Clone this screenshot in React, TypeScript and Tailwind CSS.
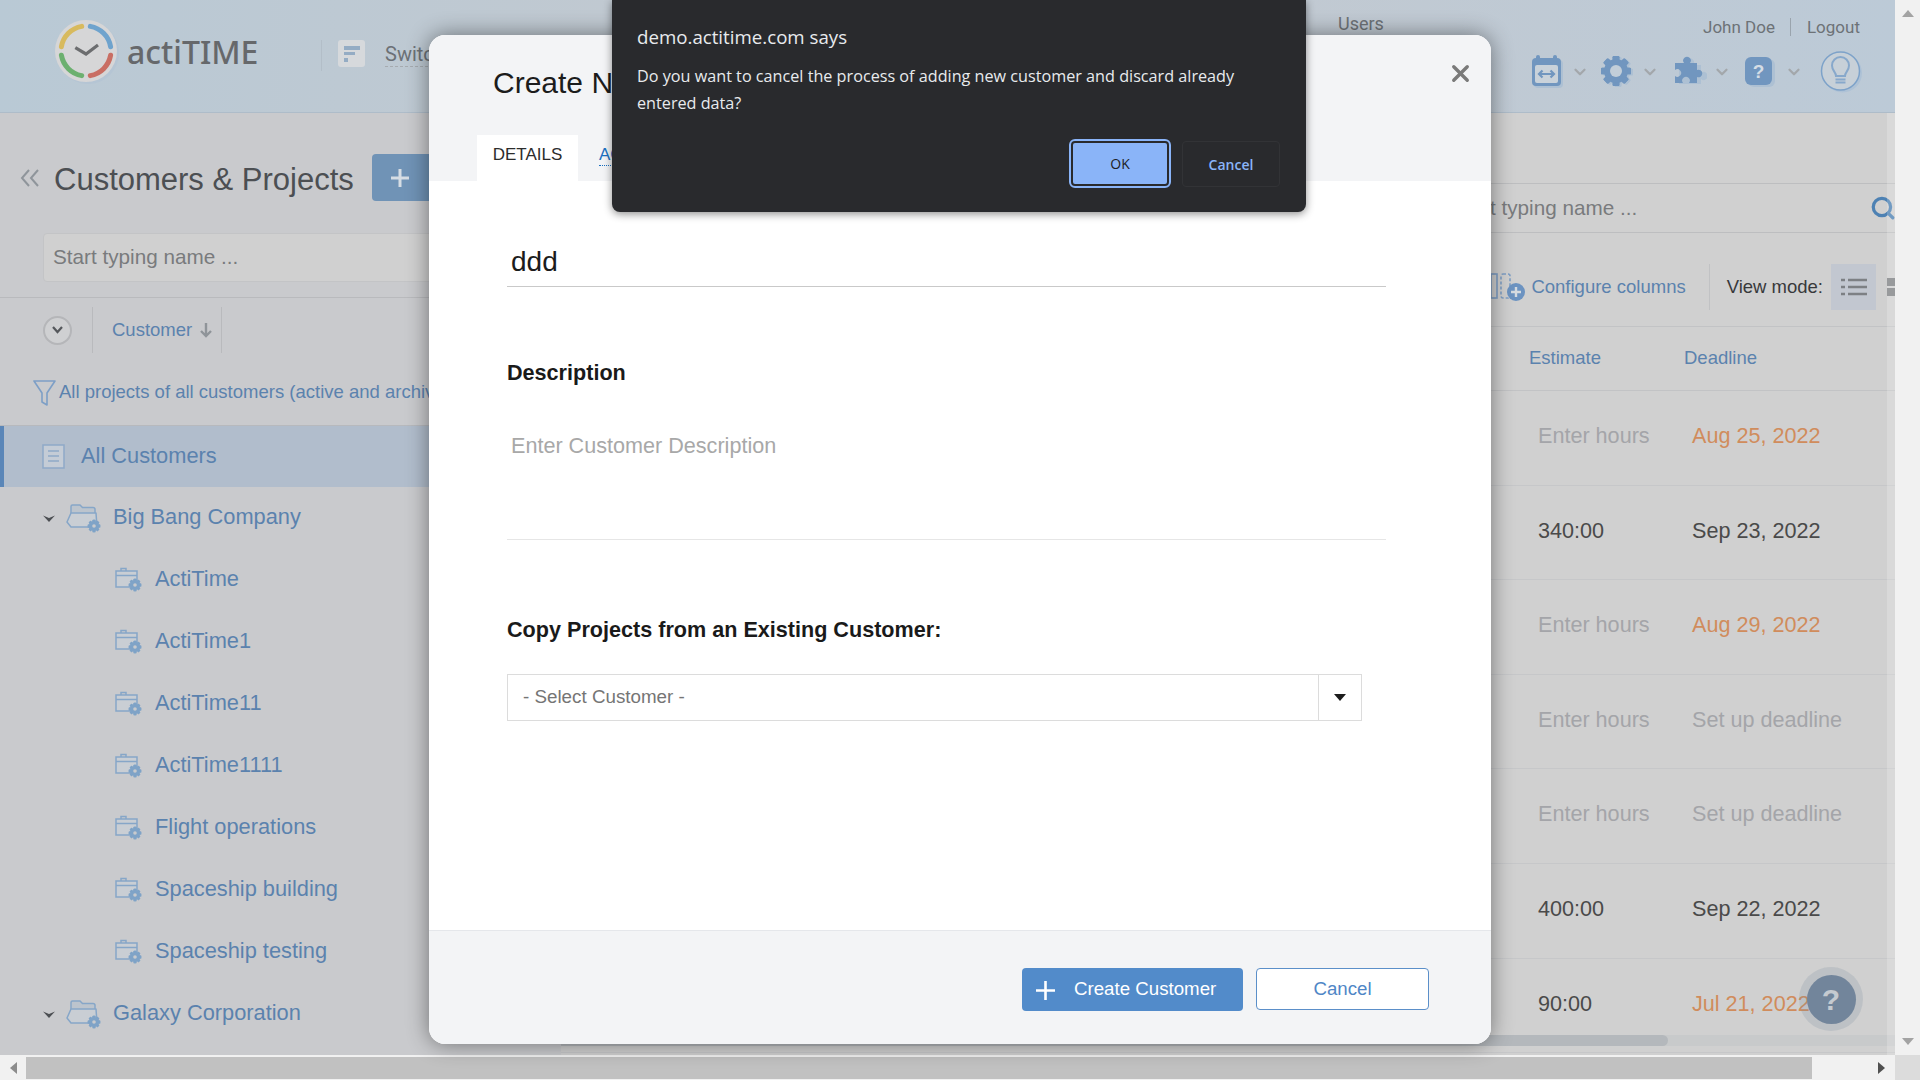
import {ChevronDown, Search, X} from "lucide-react";

const PROJECTS = ["ActiTime", "ActiTime1", "ActiTime11", "ActiTime1111", "Flight operations", "Spaceship building", "Spaceship testing"];

const ROWS = [
    {estimate: "Enter hours", deadline: "Aug 25, 2022", estimateColor: "text-[#a4a5a9]", deadlineColor: "text-[#d08c5c]"},
    {estimate: "340:00", deadline: "Sep 23, 2022", estimateColor: "text-[#4a4a4a]", deadlineColor: "text-[#4a4a4a]"},
    {estimate: "Enter hours", deadline: "Aug 29, 2022", estimateColor: "text-[#a4a5a9]", deadlineColor: "text-[#d08c5c]"},
    {estimate: "Enter hours", deadline: "Set up deadline", estimateColor: "text-[#a4a5a9]", deadlineColor: "text-[#a4a5a9]"},
    {estimate: "Enter hours", deadline: "Set up deadline", estimateColor: "text-[#a4a5a9]", deadlineColor: "text-[#a4a5a9]"},
    {estimate: "400:00", deadline: "Sep 22, 2022", estimateColor: "text-[#4a4a4a]", deadlineColor: "text-[#4a4a4a]"},
    {estimate: "90:00", deadline: "Jul 21, 2022", estimateColor: "text-[#4a4a4a]", deadlineColor: "text-[#d08c5c]"},
];

function Logo() {
    return (
        <svg width="66" height="66" viewBox="0 0 66 66" className="shrink-0">
            <circle cx="34" cy="34" r="31" fill="#b5c5d4" />
            <circle cx="32" cy="32" r="31" fill="#d6d6d7" />
            <g fill="none" strokeWidth="5" strokeLinecap="round">
                <path d="M7.4 27.7A25 25 0 0 1 27.7 7.4" stroke="#d8ba5e" />
                <path d="M36.3 7.4A25 25 0 0 1 56.6 27.7" stroke="#6fa3cd" />
                <path d="M56.6 36.3A25 25 0 0 1 36.3 56.6" stroke="#c96e63" />
                <path d="M27.7 56.6A25 25 0 0 1 7.4 36.3" stroke="#6cb06f" />
                <path d="M21.3 28.7L32 35L44 26" stroke="#6c6d6f" strokeWidth="3.2" strokeLinecap="butt" />
            </g>
        </svg>
    );
}

function Gear({x, y, r, color}: {x: number; y: number; r: number; color: string}) {
    const teeth = [0, 45, 90, 135, 180, 225, 270, 315];
    return (
        <g>
            {teeth.map((deg) => (
                <rect key={deg} x={x - r * 0.28} y={y - r * 1.25} width={r * 0.56} height={r * 2.5} rx={r * 0.1} fill={color} transform={`rotate(${deg} ${x} ${y})`} />
            ))}
            <circle cx={x} cy={y} r={r} fill={color} />
        </g>
    );
}

function CustomerIcon() {
    return (
        <svg width="36" height="30" viewBox="0 0 36 30" className="shrink-0">
            <path d="M5 12V3.5C5 2.5 5.7 2 6.5 2H14L16.5 4.5H27C28 4.5 29 5.2 29 6.3V12" fill="#bcc4cd" stroke="#86a6c8" strokeWidth="1.5" />
            <path d="M1 19L5 10H30L31 24H5L1 19Z" fill="#c9ced4" stroke="#86a6c8" strokeWidth="1.5" strokeLinejoin="round" />
            <Gear x={28} y={23} r={5} color="#7fa3c7" />
            <circle cx="28" cy="23" r="1.8" fill="#c9cacd" />
        </svg>
    );
}

function ProjectIcon() {
    return (
        <svg width="28" height="26" viewBox="0 0 28 26" className="shrink-0">
            <rect x="1" y="4" width="21" height="16" fill="#c9ced4" stroke="#86a6c8" strokeWidth="1.5" />
            <path d="M1 8.5H22" stroke="#86a6c8" strokeWidth="1.5" />
            <path d="M6 4V1.5H11V4" fill="none" stroke="#86a6c8" strokeWidth="1.5" />
            <Gear x={20} y={18} r={5} color="#7fa3c7" />
            <circle cx="20" cy="18" r="1.8" fill="#c9cacd" />
        </svg>
    );
}

function ToolCaret() {
    return <ChevronDown size={18} strokeWidth={3} className="text-[#a3a7ab]" />;
}

function HeaderTools() {
    return (
        <div className="flex items-center h-[44px] pl-[1531px]">
            <svg width="34" height="36" viewBox="0 0 34 36" className="shrink-0">
                <rect x="3" y="6" width="29" height="28" rx="4" fill="#adc0d3" />
                <rect x="1" y="4" width="29" height="28" rx="4" fill="#7196bf" />
                <rect x="5" y="1" width="4" height="7" rx="2" fill="#7196bf" />
                <rect x="22" y="1" width="4" height="7" rx="2" fill="#7196bf" />
                <rect x="4" y="11" width="23" height="18" rx="2" fill="#c9d2da" />
                <path d="M8 20H23M11.5 16.5L8 20L11.5 23.5M19.5 16.5L23 20L19.5 23.5" fill="none" stroke="#7196bf" strokeWidth="2.2" />
            </svg>
            <div className="ml-[6px] w-[29px]"><ToolCaret /></div>
            <svg width="36" height="34" viewBox="0 0 36 34" className="shrink-0">
                <Gear x={18} y={17} r={12} color="#adc0d3" />
                <Gear x={16} y={16} r={12} color="#7196bf" />
                <circle cx="16" cy="16" r="6" fill="#c2ced9" />
            </svg>
            <div className="ml-[5px] w-[32px]"><ToolCaret /></div>
            <svg width="34" height="36" viewBox="0 0 34 36" className="shrink-0">
                <path d="M6 11H14A4 4 0 1 1 20 11H28V19A4 4 0 1 1 28 25V30H6Z" fill="#adc0d3" />
                <path d="M2 9H11A3.8 3.8 0 1 1 17 9H24V16A3.8 3.8 0 1 1 24 23V29H16A3.8 3.8 0 1 0 10 29H2V22A3.8 3.8 0 1 0 2 16Z" fill="#7196bf" />
            </svg>
            <div className="ml-[6px] w-[31px]"><ToolCaret /></div>
            <svg width="32" height="32" viewBox="0 0 32 32" className="shrink-0">
                <rect x="4" y="3" width="27" height="28" rx="6" fill="#adc0d3" />
                <rect x="1" y="1" width="27" height="28" rx="6" fill="#7196bf" />
                <text x="14.5" y="22" textAnchor="middle" fontSize="19" fontWeight="700" fontFamily="Liberation Sans" fill="#d5dde5">?</text>
            </svg>
            <div className="ml-[9px] w-[35px]"><ToolCaret /></div>
            <svg width="44" height="44" viewBox="0 0 44 44" className="shrink-0">
                <circle cx="22.5" cy="23" r="19.5" fill="#aec2d6" />
                <circle cx="20.5" cy="21" r="19" fill="#c7d0d8" stroke="#7da2c9" strokeWidth="1.5" />
                <path d="M16 26C16 22 12 21 12 15.5A8.5 8.5 0 0 1 29 15.5C29 21 25 22 25 26Z" fill="none" stroke="#87a8cb" strokeWidth="2" />
                <path d="M15.5 29.5H25.5M15.5 32.5H25.5" stroke="#87a8cb" strokeWidth="2" />
            </svg>
        </div>
    );
}

function PageHeader() {
    return (
        <header className="relative h-[113px] shrink-0 border-b border-[#aebcc9] bg-linear-to-r from-[#b9c9d5] via-[#c4c9cf] to-[#bccad7] overflow-hidden">
            <div className="absolute left-[54px] top-[19px] flex items-center">
                <Logo />
                <span className="ml-[7px] -mt-[1px] font-['Noto_Sans',sans-serif] text-[32px] leading-none font-medium text-[#66686b]">actiTIME</span>
            </div>
            <div className="absolute left-[321px] top-[40px] h-[31px] w-px bg-[#b3bec8]" />
            <div className="absolute left-[338px] top-[40px] flex h-[27px] w-[27px] items-center justify-center rounded-[3px] bg-[#d6d9dc]">
                <svg width="18" height="18" viewBox="0 0 18 18">
                    <path d="M1 1H17V5H1ZM1 7H12V10H1ZM1 13H5V17H1Z" fill="#94acc4" />
                </svg>
            </div>
            <span className="absolute left-[385px] top-[44px] border-b border-dashed border-[#a6abb0] pb-[2px] font-['Roboto',sans-serif] text-[20px] leading-[20px] text-[#6c7176]">Switch to</span>
            <span className="absolute left-[1338px] top-[12px] font-['Roboto',sans-serif] text-[18px] leading-[24px] text-[#6d7277]">Users</span>
            <div className="absolute left-[1703px] top-[15px] flex items-center font-['Roboto',sans-serif] text-[17px] leading-[24px] text-[#6d7277]">
                <span>John Doe</span>
                <span className="ml-[15px] mr-[16px] h-[18px] w-px bg-[#9aa4ad]" />
                <span>Logout</span>
            </div>
            <div className="absolute left-0 top-[50px]">
                <HeaderTools />
            </div>
        </header>
    );
}

function LeftPanel() {
    return (
        <aside className="flex h-full w-[561px] shrink-0 flex-col overflow-hidden bg-[#c9cacd]">
            <div className="flex h-[120px] shrink-0 items-start pl-[20px] pt-[41px]">
                <svg width="20" height="18" viewBox="0 0 20 18" className="mt-[15px] shrink-0">
                    <path d="M9 1L2 9L9 17M18 1L11 9L18 17" fill="none" stroke="#8f959b" strokeWidth="2" />
                </svg>
                <h1 className="ml-[14px] mt-[2px] text-[31px] leading-[47px] whitespace-nowrap text-[#4c4f53]">Customers &amp; Projects</h1>
                <button className="ml-[18px] flex h-[47px] w-[100px] shrink-0 items-center rounded-[4px] bg-[#7093b6] pl-[18px]">
                    <svg width="20" height="20" viewBox="0 0 20 20">
                        <path d="M10 1V19M1 10H19" stroke="#d6dde4" strokeWidth="3" />
                    </svg>
                </button>
            </div>
            <div className="shrink-0 border-b border-[#b9babd] px-[43px] pb-[15px]">
                <div className="flex h-[49px] w-[500px] items-center rounded-[4px] border border-[#c3c4c6] bg-[#d0d0d0] pb-[1px] pl-[9px] text-[20.7px] text-[#797b7d]">Start typing name ...</div>
            </div>
            <div className="flex h-[65px] shrink-0 items-center pb-[1px] pl-[43px]">
                <div className="flex h-[29px] w-[29px] items-center justify-center rounded-full border-2 border-[#b5b6b9] bg-[#cfd0d2]">
                    <svg width="11" height="8" viewBox="0 0 11 8">
                        <path d="M1 1L5.5 6L10 1" fill="none" stroke="#55585c" strokeWidth="2.2" />
                    </svg>
                </div>
                <div className="ml-[20px] h-[46px] w-px bg-[#b9babd]" />
                <span className="ml-[19px] text-[18.5px] text-[#5b82ae]">Customer</span>
                <svg width="14" height="16" viewBox="0 0 14 16" className="ml-[7px]">
                    <path d="M7 1V14M2 9L7 14L12 9" fill="none" stroke="#8f9499" strokeWidth="2.4" />
                </svg>
                <div className="ml-[8px] h-[46px] w-px bg-[#b9babd]" />
            </div>
            <div className="flex h-[62px] shrink-0 items-start pl-[33px] pt-[17px] whitespace-nowrap">
                <svg width="23" height="27" viewBox="0 0 23 27" className="shrink-0">
                    <path d="M1 1H22L14 13V25L9 22V13Z" fill="none" stroke="#7d9fc6" strokeWidth="1.6" strokeLinejoin="round" />
                </svg>
                <span className="ml-[3px] text-[18.5px] leading-[24px] text-[#5b82ae]">All projects of all customers (active and archived)</span>
            </div>
            <div className="relative flex h-[62px] shrink-0 items-center border-t border-[#b7b9bd] bg-[#b1bdcc] pb-[1px] pl-[42px]">
                <div className="absolute inset-y-0 left-0 w-[4px] bg-[#5a86b8]" />
                <svg width="23" height="25" viewBox="0 0 23 25" className="shrink-0">
                    <rect x="1" y="1" width="21" height="23" fill="#c4ccd6" stroke="#8fa9c7" strokeWidth="1.5" />
                    <path d="M6 7H17M6 12H17M6 17H17" stroke="#8fa9c7" strokeWidth="1.5" />
                </svg>
                <span className="ml-[16px] text-[21.8px] text-[#5b82ae]">All Customers</span>
            </div>
            <CustomerRow name="Big Bang Company" />
            {PROJECTS.map((project) => (
                <div key={project} className="flex h-[62px] shrink-0 items-center pb-[1px] pl-[115px]">
                    <ProjectIcon />
                    <span className="ml-[12px] text-[21.8px] text-[#5b82ae]">{project}</span>
                </div>
            ))}
            <CustomerRow name="Galaxy Corporation" />
        </aside>
    );
}

function CustomerRow({name}: {name: string}) {
    return (
        <div className="flex h-[62px] shrink-0 items-center pb-[1px] pl-[43px]">
            <svg width="12" height="8" viewBox="0 0 12 8" className="shrink-0">
                <path d="M0 1.5L6 4L12 1.5L6 8Z" fill="#4c4f53" />
            </svg>
            <span className="ml-[11px]"><CustomerIcon /></span>
            <span className="ml-[11px] text-[21.8px] text-[#5b82ae]">{name}</span>
        </div>
    );
}

function RightPanel() {
    return (
        <section className="relative flex h-full min-w-0 flex-1 flex-col overflow-hidden bg-[#d0d0d0]">
            <div className="mt-[70px] flex h-[50px] shrink-0 items-center justify-between border-y border-[#bdbec0] pl-[891px]">
                <span className="text-[20.7px] text-[#797b7d]">Start typing name ...</span>
                <Search size={26} strokeWidth={3} className="-mr-[1px] text-[#4d81b3]" />
            </div>
            <div className="flex h-[94px] shrink-0 items-center justify-end border-b border-[#c2c3c5] pt-[15px]">
                <svg width="36" height="34" viewBox="0 0 36 34" className="shrink-0">
                    <rect x="1" y="4" width="6" height="24" fill="none" stroke="#7f9fc5" strokeWidth="1.6" />
                    <rect x="11" y="4" width="9" height="24" rx="2" fill="none" stroke="#7f9fc5" strokeWidth="1.6" strokeDasharray="3 2" />
                    <circle cx="26" cy="22" r="9" fill="#6c93c1" />
                    <path d="M26 17V27M21 22H31" stroke="#d6dbe0" strokeWidth="2.4" />
                </svg>
                <span className="ml-[5px] text-[18.5px] text-[#5b82ae]">Configure columns</span>
                <div className="ml-[23px] h-[46px] w-px bg-[#c1c2c4]" />
                <span className="ml-[17px] text-[18.5px] text-[#38393b]">View mode:</span>
                <div className="ml-[8px] flex h-[46px] w-[45px] items-center justify-center bg-[#c2c7d0]">
                    <svg width="26" height="18" viewBox="0 0 26 18">
                        <path d="M0 2H4M7 2H26M0 9H4M7 9H26M0 16H4M7 16H26" stroke="#7d8084" strokeWidth="2.6" />
                    </svg>
                </div>
                <div className="ml-[11px] w-[8px] overflow-hidden">
                    <svg width="20" height="18" viewBox="0 0 20 18">
                        <path d="M0 0H8V8H0ZM0 10H8V18H0Z" fill="#7f8184" />
                    </svg>
                </div>
            </div>
            <div className="flex h-[64px] shrink-0 items-center justify-end border-b border-[#c2c3c5] pb-[2px] text-[18.5px] text-[#5b82ae]">
                <span className="w-[155px]">Estimate</span>
                <span className="w-[211px]">Deadline</span>
            </div>
            {ROWS.map((row, idx) => (
                <div key={idx} className="flex h-[94.6px] shrink-0 items-center justify-end border-b border-[#c6c7c9] pb-[3px] text-[21.6px]">
                    <span className={`w-[155px] pl-[9px] ${row.estimateColor}`}>{row.estimate}</span>
                    <span className={`w-[211px] pl-[8px] ${row.deadlineColor}`}>{row.deadline}</span>
                </div>
            ))}
            {/* inner scrollbar */}
            <div className="absolute bottom-[9px] left-0 right-0 h-[11px] bg-[#c8cacb]">
                <div className="h-full w-[1107px] rounded-r-[6px] bg-[#b4b8bc]" />
            </div>
            <div className="absolute inset-y-0 right-0 w-[8px] bg-white/20" />
        </section>
    );
}

function CreateCustomerModal() {
    return (
        <div className="absolute left-[429px] top-[35px] flex h-[1009px] w-[1062px] flex-col overflow-hidden rounded-[16px] bg-white shadow-[0_0_22px_rgba(0,0,0,0.45)]">
            <div className="relative h-[146px] shrink-0 bg-[#f3f4f6]">
                <h2 className="absolute left-[64px] top-[29px] text-[30px] leading-[38px] whitespace-nowrap text-[#1c1c1c]">Create New Customer</h2>
                <X size={27} strokeWidth={3} className="absolute right-[17px] top-[25px] text-[#7a7a7a]" />
                <div className="absolute bottom-0 left-[48px] flex h-[46px] items-center">
                    <div className="flex h-full w-[101px] items-center justify-center bg-white pb-[6px] text-[17px] text-[#2c2c2c]">DETAILS</div>
                    <span className="mb-[6px] ml-[21px] border-b border-dotted border-[#1a6fc0] text-[17px] leading-[21px] text-[#1a6fc0]">ACCESS</span>
                </div>
            </div>
            <div className="flex min-h-0 flex-1 flex-col pl-[78px] pr-[105px]">
                <div className="mt-[65px] h-[41px] border-b border-[#c9c9c9] pl-[4px] text-[28px] leading-[32px] text-[#1c1c1c]">ddd</div>
                <div className="mt-[73px] text-[21.6px] leading-[26px] font-bold text-[#1a1a1a]">Description</div>
                <div className="mt-[47px] h-[107px] border-b border-[#e6e6e6] pl-[4px] text-[21.6px] leading-[26px] text-[#a8a8a8]">Enter Customer Description</div>
                <div className="mt-[77px] text-[21.6px] leading-[26px] font-bold whitespace-nowrap text-[#1a1a1a]">Copy Projects from an Existing Customer:</div>
                <div className="mt-[31px] flex h-[47px] w-[855px] items-center border border-[#dcdcdc]">
                    <span className="flex-1 pl-[15px] text-[18.8px] text-[#757575]">- Select Customer -</span>
                    <div className="flex h-full w-[43px] items-center justify-center border-l border-[#dcdcdc]">
                        <svg width="12" height="7" viewBox="0 0 12 7">
                            <path d="M0 0H12L6 7Z" fill="#1c1c1c" />
                        </svg>
                    </div>
                </div>
            </div>
            <div className="flex h-[114px] shrink-0 items-start border-t border-[#e5e7eb] bg-[#f3f4f6] pl-[593px] pt-[37px]">
                <button className="flex h-[43px] w-[221px] items-center rounded-[4px] bg-[#528bca] pl-[14px] text-[18.7px] text-white">
                    <svg width="19" height="19" viewBox="0 0 19 19" className="mt-[2px] shrink-0">
                        <path d="M9.5 0V19M0 9.5H19" stroke="white" strokeWidth="2.6" />
                    </svg>
                    <span className="ml-[19px]">Create Customer</span>
                </button>
                <button className="ml-[13px] h-[42px] w-[173px] rounded-[4px] border border-[#5b8fc9] bg-white text-[18.7px] text-[#4f86c6]">Cancel</button>
            </div>
        </div>
    );
}

function ConfirmDialog() {
    return (
        <div className="absolute left-[612px] top-0 h-[212px] w-[694px] rounded-b-[8px] bg-[#292a2d] pl-[25px] font-['Open_Sans',sans-serif] shadow-[0_2px_8px_rgba(0,0,0,0.45)]">
            <div className="pt-[24px] text-[18.7px] leading-[26px] text-[#e8eaed]">demo.actitime.com says</div>
            <div className="mt-[13px] w-[640px] text-[16.2px] leading-[27px] text-[#e8eaed]">Do you want to cancel the process of adding new customer and discard already entered data?</div>
            <div className="absolute left-[457px] top-[139px] flex h-[49px] w-[102px] items-center justify-center rounded-[6px] border-[2px] border-[#8ab4f8] bg-[#8ab4f8] outline-[2px] -outline-offset-[4px] outline-[#292a2d] text-[14px] text-[#202124]">OK</div>
            <div className="absolute left-[570px] top-[141px] flex h-[46px] w-[98px] items-center justify-center rounded-[4px] border border-[#323336] text-[14px] font-semibold text-[#8ab4f8]">Cancel</div>
        </div>
    );
}

function App() {
    return (
        <div className="relative flex h-screen w-full flex-col overflow-hidden bg-[#f1f1f1] font-['Liberation_Sans',Arial,sans-serif]">
            <div className="flex min-h-0 flex-1">
                <div className="flex min-w-0 flex-1 flex-col">
                    <PageHeader />
                    <div className="flex min-h-0 flex-1">
                        <LeftPanel />
                        <RightPanel />
                    </div>
                </div>
                {/* page scrollbar */}
                <div className="flex w-[25px] shrink-0 flex-col items-center justify-between bg-[#f1f1f1] py-[10px]">
                    <svg width="12" height="7" viewBox="0 0 12 7"><path d="M6 0L12 7H0Z" fill="#a3a3a3" /></svg>
                    <svg width="12" height="7" viewBox="0 0 12 7"><path d="M0 0H12L6 7Z" fill="#a3a3a3" /></svg>
                </div>
            </div>
            <div className="flex h-[25px] shrink-0 items-center bg-[#f1f1f1]">
                <div className="flex w-[26px] justify-center">
                    <svg width="7" height="12" viewBox="0 0 7 12"><path d="M7 0V12L0 6Z" fill="#8c8c8c" /></svg>
                </div>
                <div className="h-[22px] w-[1786px] bg-[#c1c1c1]" />
                <div className="flex flex-1 justify-end pr-[10px]">
                    <svg width="7" height="12" viewBox="0 0 7 12"><path d="M0 0L7 6L0 12Z" fill="#505050" /></svg>
                </div>
                <div className="h-full w-[25px] bg-[#dcdcdc]" />
            </div>
            <CreateCustomerModal />
            <ConfirmDialog />
            <div className="absolute left-[1799px] top-[967px] flex h-[64px] w-[64px] items-center justify-center rounded-full bg-[#72859b]/20">
                <div className="flex h-[49px] w-[49px] items-center justify-center rounded-full bg-[#72859b] text-[30px] font-bold text-[#c5cad0]">?</div>
            </div>
        </div>
    );
}

export default App;
